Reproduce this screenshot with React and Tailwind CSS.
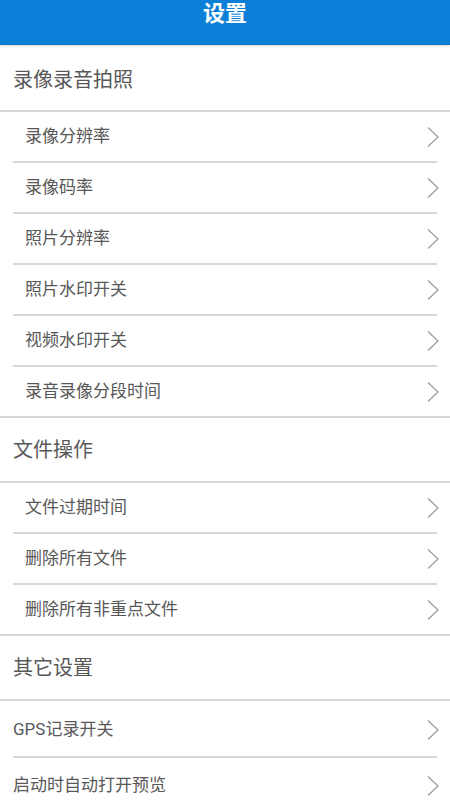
import React from "react";

const sections = [
  {
    title: "录像录音拍照",
    items: ["录像分辨率", "录像码率", "照片分辨率", "照片水印开关", "视频水印开关", "录音录像分段时间"],
  },
  {
    title: "文件操作",
    items: ["文件过期时间", "删除所有文件", "删除所有非重点文件"],
  },
];

const others = ["GPS记录开关", "启动时自动打开预览"];

const Chevron = () => (
  <svg width="12" height="22" viewBox="0 0 12 22" className="-mr-[2px] shrink-0">
    <polyline points="1,1.5 11,11 1,20.5" fill="none" stroke="#9a9a9a" strokeWidth="1.2" />
  </svg>
);

const App = () => {
  return (
    <div
      className="w-[450px] h-[800px] overflow-hidden bg-white"
      style={{ fontFamily: 'Roboto, "Noto Sans CJK SC", "Noto Sans", sans-serif' }}
    >
      {/* Header */}
      <div className="h-[45px] bg-[#0b7ed8] border-b border-[#0a6fc0] flex justify-center pt-[1px] shadow-[0_1px_3px_rgba(0,0,0,0.15)] relative">
        <h1 className="text-[22px] leading-[26px] font-bold text-white">设置</h1>
      </div>

      {sections.map((section, si) => (
        <div key={section.title}>
          <div
            className={`${si === 0 ? "h-[67px] pt-[5px]" : "h-[65px]"} flex items-center px-[13px] border-b-2 border-[#d8d8d8]`}
          >
            <span className="text-[20px] text-[#585858]">{section.title}</span>
          </div>
          {section.items.map((item, i) => {
            const last = i === section.items.length - 1;
            return (
              <div key={item} className={last ? "border-b-2 border-[#d8d8d8]" : ""}>
                <div
                  className={`${last ? "h-[49px]" : "h-[51px] border-b-2 border-[#d8d8d8]"} mx-[13px] flex items-center justify-between`}
                >
                  <span className="pl-[12px] text-[17px] text-[#585858]">{item}</span>
                  <Chevron />
                </div>
              </div>
            );
          })}
        </div>
      ))}

      {/* Other settings */}
      <div className="h-[65px] flex items-center px-[13px] border-b-2 border-[#d8d8d8]">
        <span className="text-[20px] text-[#585858]">其它设置</span>
      </div>
      {others.map((item, i) => (
        <div
          key={item}
          className={`${i === 0 ? "h-[57px] pt-[2px] border-b-2 border-[#d8d8d8]" : "h-[55px] pt-[1px]"} mx-[13px] flex items-center justify-between`}
        >
          <span className="text-[17px] text-[#585858]">{item}</span>
          <Chevron />
        </div>
      ))}
    </div>
  );
};

export default App;
